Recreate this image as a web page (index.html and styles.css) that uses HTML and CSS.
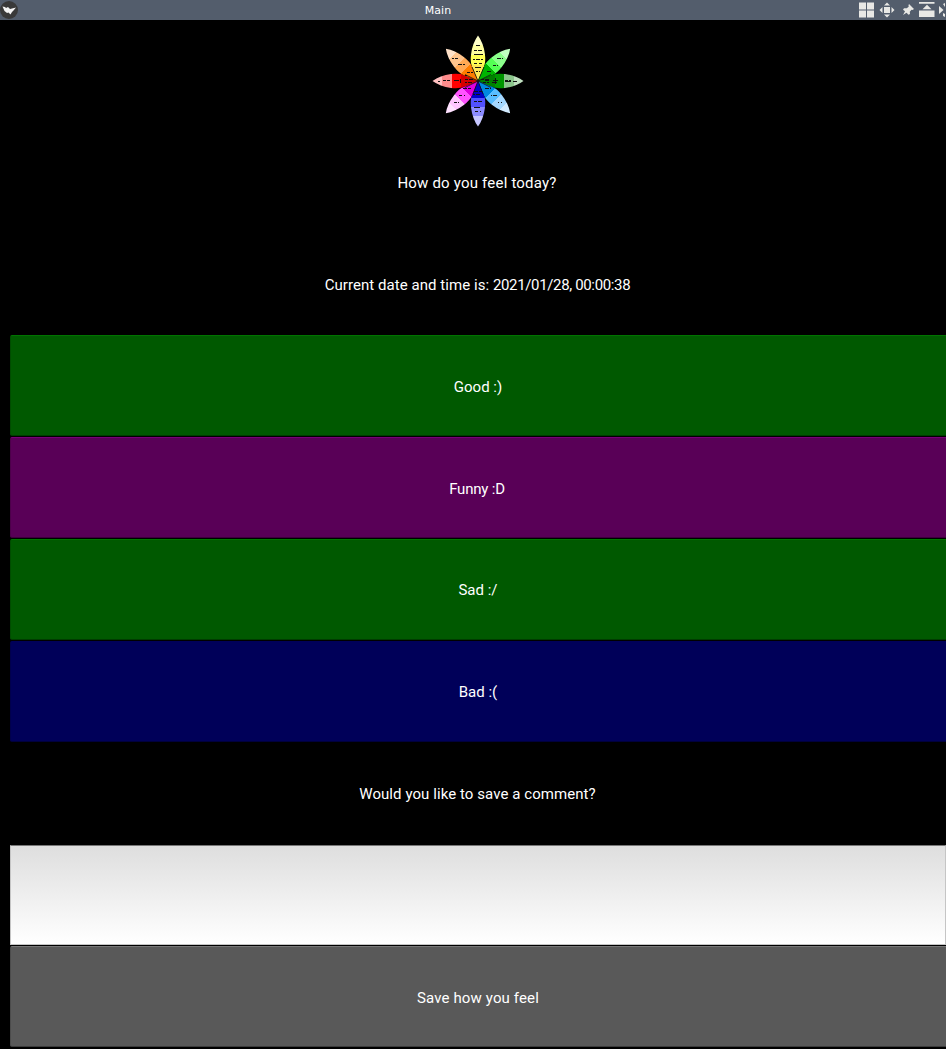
FILE: index.html
```html
<!DOCTYPE html>
<html lang="en">
<head>
<meta charset="utf-8">
<title>Main</title>
<link rel="stylesheet" href="styles.css">
</head>
<body>
<header class="titlebar">
  <svg class="app-icon" width="20" height="20" viewBox="0 0 20 20"><circle cx="9" cy="10" r="9" fill="#393939"/><path d="M2.500 6.500l2.500.5 1 1 2-1 2 2 6-1.500-2.500 3-1.500 1.500-1.500 2.500-2-2-1.500.5-2.500-2z" fill="#f4f4f4"/></svg>
  <h1 class="title">Main</h1>
  <svg class="controls" width="88" height="20" viewBox="0 0 88 20" fill="#e8e8e5">
    <path d="M2 2.500h7v7H2zM10 2.500h7v7h-7zM2 10.500h7v7H2zM10 10.500h7v7h-7z"/>
    <path d="M27 7h6v6h-6zM30 2.500l3 3h-6zM30 17.500l3-3h-6zM22.500 10l3-3v6zM37.500 10l-3-3v6z"/>
    <path d="M52 4l5 5-1.500 1-1-.2-1.700 2 .2 2.200-1.500.7-2-2L46 15l2-3.700-2-1.600 1-1.500 2.700.1 2-1.600-.2-1.500z"/>
    <path d="M62 2h15.500v1.700H62zM70 4.800l4.500 4.500h-9zM62 10.500h15.500V17H62z"/>
    <path d="M82 6l4.500 4-4.500 4zM86 4l2-1v4zM86 13l2 1v3l-2-1z"/>
  </svg>
</header>
<main class="layout">
  <div class="row logo">
    <svg class="flower" width="106" height="106" viewBox="0 0 106 106" shape-rendering="crispEdges">
      <defs>
        <clipPath id="petal"><path d="M0 0L-5.800-14Q-8-19-6.900-27Q-5.500-38 0-45.500Q5.500-38 6.900-27Q8-19 5.800-14Z"/></clipPath>
      </defs>
      <g transform="translate(53 53)">
        <g clip-path="url(#petal)"><path fill="#ffffc8" d="M-8-46h16v10H-8z"/><path fill="#ffff9f" d="M-8-36h16v10H-8z"/><path fill="#ffff54" d="M-8-26h16v10H-8z"/><path fill="#ffe854" d="M-8-16h16V0H-8z"/></g>
        <g transform="rotate(45)"><g clip-path="url(#petal)"><path fill="#c0ffc0" d="M-8-46h16v10H-8z"/><path fill="#8cff8c" d="M-8-36h16v10H-8z"/><path fill="#54ff54" d="M-8-26h16v10H-8z"/><path fill="#00b400" d="M-8-18h16V0H-8z"/></g></g>
        <g transform="rotate(90)"><g clip-path="url(#petal)"><path fill="#c0e0c0" d="M-8-46h16v10H-8z"/><path fill="#8cc68c" d="M-8-36h16v10H-8z"/><path fill="#009600" d="M-8-26h16v10H-8z"/><path fill="#008000" d="M-8-17h16V0H-8z"/></g></g>
        <g transform="rotate(135)"><g clip-path="url(#petal)"><path fill="#d2ebff" d="M-8-46h16v10H-8z"/><path fill="#a5d8ff" d="M-8-36h16v10H-8z"/><path fill="#59bdff" d="M-8-26h16v10H-8z"/><path fill="#0089e0" d="M-8-17h16V0H-8z"/></g></g>
        <g transform="rotate(180)"><g clip-path="url(#petal)"><path fill="#c6c6ff" d="M-8-46h16v11H-8z"/><path fill="#8c8cff" d="M-8-35h16v9H-8z"/><path fill="#5151ff" d="M-8-26h16v10H-8z"/><path fill="#0000c8" d="M-8-17h16V0H-8z"/></g></g>
        <g transform="rotate(225)"><g clip-path="url(#petal)"><path fill="#ffe2ff" d="M-8-46h16v10H-8z"/><path fill="#ffc6ff" d="M-8-36h16v10H-8z"/><path fill="#ff54ff" d="M-8-26h16v10H-8z"/><path fill="#de00de" d="M-8-16h16V0H-8z"/></g></g>
        <g transform="rotate(270)"><g clip-path="url(#petal)"><path fill="#ffc0c0" d="M-8-46h16v10H-8z"/><path fill="#ff8c8c" d="M-8-36h16v10H-8z"/><path fill="#f00" d="M-8-26h16v10H-8z"/><path fill="#d40000" d="M-8-17h16V0H-8z"/></g></g>
        <g transform="rotate(315)"><g clip-path="url(#petal)"><path fill="#ffe1c8" d="M-8-46h16v10H-8z"/><path fill="#ffc48c" d="M-8-36h16v10H-8z"/><path fill="#ffa854" d="M-8-26h16v10H-8z"/><path fill="#ff7d00" d="M-8-17h16V0H-8z"/></g></g>
      </g>
      <path stroke="#111" fill="none" d="M51 17.500h4M49 22.500h3m1 0h4M49 26.500h9M48 31.500h2m1 0h4m1 0h2M49 35.500h3m2 0h3M50 39.500h6M51 43.500h2m1 0h1"/>
      <path stroke="#111" fill="none" d="M72 30.500h4m1 0h1M68 37.500h3m1 0h1M62 43.500h4M56 51.500h3m1 0h4M58 54.500h3m1 0h2m3 0h5M60 52.500h4m4 0h5M70.500 50v6M80 52.500h3m1 0h2M80 53.500h6m2 0h4"/>
      <path stroke="#111" fill="none" d="M60 60.500h4m1 0h1M66 67.500h1m1 0h4M73 74.500h1m2 0h1M49 63.500h4m1 0h3M48 66.500h2m1 0h4M49 73.500h3m1 0h4M49 79.500h6M50 83.500h3m2 0h1"/>
      <path stroke="#111" fill="none" d="M38 60.500h4m1 0h3M34 67.500h3m2 0h1M29 74.500h3m1 0h1M40 51.500h3m1 0h4M40 54.500h2m1 0h4M35.500 51v4M29 52.500h5M18 52.500h3m1 0h3M13 53.500h2"/>
      <path stroke="#111" fill="none" d="M42 44.500h3m1 0h2M33 36.500h4m1 0h2M27 30.500h2m1 0h3M40 47.500h2"/>
      <path stroke="#111" stroke-width=".8" fill="none" shape-rendering="auto" d="M47 39L53 53L59 39M66 46.500L53 53L66 59.500M58 66L53 53L48 66M40 59.500L53 53L40 46.500"/>
    </svg>
  </div>
  <p class="row label question">How do you feel today?</p>
  <p class="row label"><span class="time-text">Current date and time is:&nbsp;</span><span class="time-value">2021/01/28, 00:00:38</span></p>
  <button class="row button good">Good :)</button>
  <button class="row button funny">Funny :D</button>
  <button class="row button good sad">Sad :/</button>
  <button class="row button bad">Bad :(</button>
  <p class="row label prompt">Would you like to save a comment?</p>
  <textarea class="row comment" aria-label="Comment"></textarea>
  <button class="row button save">Save how you feel</button>
</main>
</body>
</html>
```
FILE: styles.css
```css
* { box-sizing: border-box; }
body {
  margin: 0;
  height: 1049px;
  overflow: hidden;
  background: #000;
  color: #fff;
  font-family: Roboto, sans-serif;
}
.titlebar {
  display: grid;
  grid-template-columns: 20px 834px 88px;
  height: 20px;
  column-gap: 1px;
  background: #535d6c;
  line-height: 20px;
}
.controls { margin-left: 1px; }
.title {
  margin: 0;
  text-align: center;
  font: 11px/21px "DejaVu Sans", sans-serif;
}
.layout {
  display: grid;
  grid-template-rows: repeat(10, 100.7px);
  row-gap: 1.15px;
  padding: 10px 0 0 10px;
}
.row {
  display: flex;
  align-items: center;
  justify-content: center;
  width: 100%;
  margin: 0;
  padding: 2px 1px 0 0;
  color: #fff;
  font: 15px/18px Roboto, sans-serif;
}
.logo { padding-right: 0; }
.question { letter-spacing: .2px; padding-right: 2px; }
.time-text { letter-spacing: .05px; }
.time-value { letter-spacing: -.35px; }
.prompt { letter-spacing: .07px; }
.button {
  padding-top: 3px;
  border: 1px solid;
  border-width: 1px 0 1px 1px;
  border-radius: 2px 0 0 2px;
}
.good { background: #005900; border-color: #007400 #005900 #003c00 #004c00; }
.funny { padding-right: 3px; background: #590057; border-color: #780076 #590057 #3c003b #4c004a; letter-spacing: -.2px; }
.bad { background: #000059; border-color: #000059 #000059 #00003c #00004c; }
.sad, .bad { padding-top: 1px; }
.save { background: #595959; border-color: #777 #595959 #3c3c3c #4c4c4c; letter-spacing: .13px; }
.comment {
  height: 100px;
  resize: none;
  border: 1px solid #c5c5c5;
  border-top-color: #777;
  border-radius: 0;
  background: linear-gradient(#dedede, #fff);
  color: #000;
}
```
